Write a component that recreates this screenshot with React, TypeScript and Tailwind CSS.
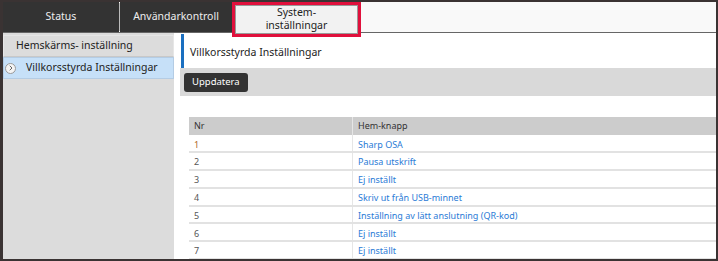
import { ChevronRight } from 'lucide-react';

const rows = [
  { nr: '1', label: 'Sharp OSA' },
  { nr: '2', label: 'Pausa utskrift' },
  { nr: '3', label: 'Ej inställt' },
  { nr: '4', label: 'Skriv ut från USB-minnet' },
  { nr: '5', label: 'Inställning av lätt anslutning (QR-kod)' },
  { nr: '6', label: 'Ej inställt' },
  { nr: '7', label: 'Ej inställt' },
];

export default function App() {
  return (
    <div
      className="w-[718px] h-[261px] overflow-hidden bg-white border-2 border-l-[3px] border-[#3a3333] flex flex-col"
      style={{ fontFamily: '"Noto Sans", "Open Sans", sans-serif' }}
    >
      {/* Tabs */}
      <div className="h-[31px] flex shrink-0 bg-[#f9f9f9] border-b border-[#666] relative z-10">
        <div className="w-[116px] bg-[#333] text-[#eee] text-[10.5px] flex items-center justify-center">Status</div>
        <div className="w-px bg-[#bbb] my-[1px]" />
        <div className="w-[112px] bg-[#333] text-[#eee] text-[10.5px] flex items-center justify-center">Användarkontroll</div>
        <div className="w-[129px] h-[35px] shrink-0 self-start border-[3px] border-[#e0103c] bg-[#f2f2f2] flex">
          <div className="flex-1 border border-[#999] text-[#222] text-[10.5px] leading-[13px] flex flex-col items-center justify-end pb-[1px]">
            <span>System-</span>
            <span>inställningar</span>
          </div>
        </div>
        <div className="flex-1" />
      </div>

      <div className="flex flex-1 min-h-0">
        {/* Sidebar */}
        <div className="w-[171px] bg-[#dcdcdc] pt-[2px] shrink-0">
          <div className="h-[22px] border border-[#e6e6e6] border-b-[#c8c8c8] flex items-center pl-[12px] text-[10.5px] text-[#222]">
            Hemskärms- inställning
          </div>
          <div className="h-[22px] bg-[#c6e0f8] border border-[#b4cce4] flex items-center text-[10.5px] text-[#222]">
            <span className="ml-[1px] w-[11px] h-[11px] rounded-full bg-[#f4f4f4] border border-[#999] flex items-center justify-center">
              <ChevronRight size={8} strokeWidth={3} className="text-[#666]" />
            </span>
            <span className="ml-[10px]">Villkorsstyrda Inställningar</span>
          </div>
        </div>

        {/* Content */}
        <div className="flex-1 min-w-0 pl-[6px] pt-[1px]">
          <div className="h-[34px] flex items-center">
            <div className="w-[3px] h-full bg-[#1a6fc0] ml-[1px]" />
            <span className="ml-[6px] pt-[3px] text-[10.5px] text-[#222]">Villkorsstyrda Inställningar</span>
          </div>
          <div className="h-[28px] bg-[#d9d9d9] flex items-center pl-[4px]">
            <button className="h-[19px] px-[8px] bg-[#333] text-white text-[9.5px] rounded-[3px]">Uppdatera</button>
          </div>
          <div className="pl-[9px] pt-[21px] text-[9px]">
            <div className="w-[540px]">
              <div className="h-[18.4px] bg-[#cccccc] text-[#333] flex">
                <div className="w-[164px] pl-[5px] border-r border-[#e6e6e6] flex items-center">Nr</div>
                <div className="flex-1 pl-[5px] flex items-center">Hem-knapp</div>
              </div>
              {rows.map((r) => (
                <div key={r.nr} className="h-[17.8px] border-b-2 border-[#e2e2e2] flex">
                  <div className={`w-[164px] pl-[5px] pt-[2px] border-r border-[#e6e6e6] flex items-center ${r.nr === '1' ? 'text-[#b06a2a]' : 'text-[#555]'}`}>
                    {r.nr}
                  </div>
                  <div className="flex-1 pl-[5px] pt-[2px] flex items-center text-[#2a7bd6]">{r.label}</div>
                </div>
              ))}
            </div>
          </div>
        </div>
      </div>
    </div>
  );
}
